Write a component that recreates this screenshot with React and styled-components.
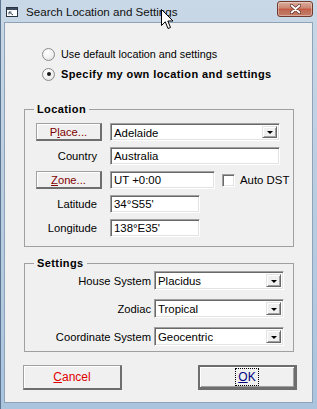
import React from 'react';
import styled, { createGlobalStyle } from 'styled-components';

const GlobalStyle = createGlobalStyle`
  html, body {
    margin: 0;
    padding: 0;
  }
  body {
    width: 317px;
    height: 409px;
    overflow: hidden;
    font-family: "Liberation Sans", Arial, sans-serif;
  }
`;

const Window = styled.div`
  position: relative;
  width: 317px;
  height: 409px;
  box-sizing: border-box;
  display: flex;
  flex-direction: column;
  background: linear-gradient(180deg, #c9d8e6 0%, #bccfe2 40%, #aac4de 100%);
  border-left: 1px solid #5c7691;
`;

const TitleBar = styled.div`
  height: 22px;
  display: flex;
  align-items: center;
  padding-left: 4px;
  position: relative;
`;

const TitleText = styled.span`
  margin-left: 7px;
  font-size: 11.6px;
  color: #111;
  padding-top: 1px;
`;

const CloseButton = styled.div`
  position: absolute;
  top: 1px;
  left: 276px;
  width: 34px;
  height: 14px;
  border: 1px solid #6e3b2e;
  border-radius: 3px;
  background: linear-gradient(180deg, #dcab9a 0%, #c98672 45%, #d2452c 50%, #bd6a55 56%, #c47c68 100%);
  display: flex;
  align-items: center;
  justify-content: center;
  box-shadow: inset 0 0 0 1px rgba(255, 255, 255, 0.35);
`;

const Client = styled.div`
  flex: 1;
  margin: 0 4px 6px 3px;
  border: 1px solid #8ea3b8;
  background: #f0f0f0;
  display: flex;
  flex-direction: column;
  font-size: 10.6px;
  color: #000;
`;

const RadioList = styled.div`
  display: flex;
  flex-direction: column;
  gap: 4px;
  padding: 23px 0 0 37px;
`;

const RadioRow = styled.label`
  display: flex;
  align-items: center;
  height: 16px;
  gap: 6px;
  font-weight: ${(p) => (p.$checked ? 'bold' : 'normal')};
  font-size: ${(p) => (p.$checked ? '11px' : '10.8px')};
  letter-spacing: ${(p) => (p.$checked ? '0.4px' : '0')};
`;

const RadioDot = styled.span`
  width: 11px;
  height: 11px;
  border-radius: 50%;
  border: 1px solid #8c8c8c;
  background: radial-gradient(circle at 40% 35%, #ffffff 0%, #f4f4f4 45%, #d6d6d6 100%);
  display: flex;
  align-items: center;
  justify-content: center;

  &::after {
    content: '';
    width: 4px;
    height: 4px;
    border-radius: 50%;
    background: ${(p) => (p.$checked ? '#1a1a1a' : 'transparent')};
  }
`;

const GroupBox = styled.fieldset`
  margin: ${(p) => p.$top}px 18px 0 19px;
  padding: ${(p) => p.$padTop}px 9px ${(p) => p.$padBottom}px 11px;
  border: 1px solid #a0a0a0;
  min-width: 0;
`;

const Legend = styled.legend`
  margin-left: -2px;
  padding: 0 3px;
  font-weight: bold;
  font-size: 11px;
  letter-spacing: 0.4px;
  line-height: 14px;
`;

const LocationGrid = styled.div`
  display: grid;
  grid-template-columns: 66px 1fr;
  grid-auto-rows: 18px;
  column-gap: 8px;
  row-gap: 6px;
  align-items: center;
`;

const SettingsGrid = styled.div`
  display: grid;
  grid-template-columns: 1fr 130px;
  grid-auto-rows: 19px;
  column-gap: 3px;
  row-gap: 9px;
  align-items: center;
`;

const FieldLabel = styled.span`
  text-align: right;
  padding-right: ${(p) => p.$pad || 0}px;
  white-space: nowrap;
  font-size: 11.2px;
`;

const sunken = `
  box-sizing: border-box;
  border: 1px solid;
  border-color: #a0a0a0 #ffffff #ffffff #a0a0a0;
  box-shadow: inset 1px 1px #696969, inset -1px -1px #e3e3e3;
  background: #fff;
`;

const TextBox = styled.div`
  ${sunken}
  width: ${(p) => p.$width}px;
  height: ${(p) => p.$height || 18}px;
  padding: 2px 3px;
  font-size: 11.4px;
  line-height: 13px;
  white-space: nowrap;
`;

const Combo = styled.div`
  ${sunken}
  width: ${(p) => p.$width}px;
  height: ${(p) => p.$height || 18}px;
  display: flex;
  align-items: stretch;
  padding: 2px;
`;

const ComboText = styled.span`
  flex: 1;
  padding-left: 1px;
  font-size: 11.4px;
  line-height: 14px;
  white-space: nowrap;
`;

const ComboArrow = styled.span`
  width: 15px;
  box-sizing: border-box;
  background: #f0f0f0;
  border: 1px solid;
  border-color: #e3e3e3 #696969 #696969 #e3e3e3;
  box-shadow: inset 1px 1px #fff, inset -1px -1px #a0a0a0;
  display: flex;
  align-items: center;
  justify-content: center;

  &::after {
    content: '';
    margin-top: 1px;
    border-left: 3px solid transparent;
    border-right: 3px solid transparent;
    border-top: 3px solid #000;
  }
`;

const PushButton = styled.div`
  box-sizing: border-box;
  height: 18px;
  background: #f0f0f0;
  border-style: solid;
  border-width: 1px 2px 2px 1px;
  border-color: #a0a0a0 #6e6e6e #6e6e6e #a0a0a0;
  box-shadow: inset 1px 1px #ffffff;
  display: flex;
  align-items: center;
  justify-content: center;
  color: #800000;
  font-size: 11.2px;
`;

const ZoneCell = styled.div`
  display: flex;
  align-items: center;
  white-space: nowrap;
`;

const CheckBox = styled.span`
  ${sunken}
  flex: none;
  width: 13px;
  height: 13px;
  margin: 0 5px 0 7px;
`;

const CheckLabel = styled.span`
  font-size: 11.4px;
`;

const ButtonBar = styled.div`
  display: flex;
  justify-content: space-between;
  margin-top: 13px;
  padding: 0 15px 0 18px;
`;

const DialogButton = styled.div`
  box-sizing: border-box;
  width: 99px;
  height: 25px;
  background: #f0f0f0;
  border-style: solid;
  border-width: ${(p) => (p.$default ? '2px 3px 3px 2px' : '1px 2px 2px 1px')};
  border-color: ${(p) => (p.$default ? '#6e6e6e' : '#a0a0a0 #6e6e6e #6e6e6e #a0a0a0')};
  box-shadow: ${(p) => (p.$default ? 'inset 1px 1px #fff, inset -1px -1px #a0a0a0' : 'inset 1px 1px #fff')};
  display: flex;
  align-items: center;
  justify-content: center;
  font-size: 12px;
  color: ${(p) => p.$color};
`;

const FocusRect = styled.span`
  padding: 1px 2px;
  border: 1px dotted #000;
  line-height: 14px;
`;

const Mnemonic = styled.u`
  text-decoration: underline;
  text-underline-offset: 1px;
`;

const Cursor = styled.svg`
  position: absolute;
  left: 160px;
  top: 9px;
`;

const WindowIcon = () => (
  <svg width="14" height="13" viewBox="0 0 14 13">
    <rect x="1.5" y="2.5" width="11" height="9" fill="#fff" stroke="#2a3440" />
    <rect x="2" y="3" width="10" height="2" fill="#3d4d5e" />
    <path d="M4 7 L8 10 M4 7 L4 9.5 M4 7 L6.5 7" stroke="#3d4d5e" strokeWidth="1" fill="none" />
  </svg>
);

const CloseGlyph = () => (
  <svg width="11" height="10" viewBox="0 0 11 10">
    <path d="M1.5 1.5 L9.5 8.5 M9.5 1.5 L1.5 8.5" stroke="#5a2a20" strokeWidth="3.2" strokeLinecap="round" />
    <path d="M1.5 1.5 L9.5 8.5 M9.5 1.5 L1.5 8.5" stroke="#ffffff" strokeWidth="1.8" strokeLinecap="round" />
  </svg>
);

const MouseCursor = () => (
  <Cursor width="13" height="21" viewBox="0 0 13 21">
    <path
      d="M0.5 0.5 L0.5 16.5 L4.3 12.8 L7 19.5 L9.5 18.5 L6.8 12 L12 12 Z"
      fill="#fff"
      stroke="#000"
      strokeWidth="1"
      strokeLinejoin="round"
    />
  </Cursor>
);

const App = () => (
  <>
    <GlobalStyle />
    <Window>
      <TitleBar>
        <WindowIcon />
        <TitleText>Search Location and Settings</TitleText>
        <CloseButton>
          <CloseGlyph />
        </CloseButton>
      </TitleBar>
      <Client>
        <RadioList>
          <RadioRow>
            <RadioDot />
            Use default location and settings
          </RadioRow>
          <RadioRow $checked>
            <RadioDot $checked />
            Specify my own location and settings
          </RadioRow>
        </RadioList>

        <GroupBox $top={20} $padTop={7} $padBottom={9}>
          <Legend>Location</Legend>
          <LocationGrid>
            <PushButton>
              P<Mnemonic>l</Mnemonic>ace...
            </PushButton>
            <Combo $width={170}>
              <ComboText>Adelaide</ComboText>
              <ComboArrow />
            </Combo>

            <FieldLabel $pad={5}>Country</FieldLabel>
            <TextBox $width={170}>Australia</TextBox>

            <PushButton>
              <Mnemonic>Z</Mnemonic>one...
            </PushButton>
            <ZoneCell>
              <TextBox $width={105}>UT +0:00</TextBox>
              <CheckBox />
              <CheckLabel>Auto DST</CheckLabel>
            </ZoneCell>

            <FieldLabel $pad={5}>Latitude</FieldLabel>
            <TextBox $width={90}>34°S55'</TextBox>

            <FieldLabel $pad={5}>Longitude</FieldLabel>
            <TextBox $width={90}>138°E35'</TextBox>
          </LocationGrid>
        </GroupBox>

        <GroupBox $top={9} $padTop={1} $padBottom={5}>
          <Legend>Settings</Legend>
          <SettingsGrid>
            <FieldLabel>House System</FieldLabel>
            <Combo $width={130} $height={19}>
              <ComboText>Placidus</ComboText>
              <ComboArrow />
            </Combo>

            <FieldLabel>Zodiac</FieldLabel>
            <Combo $width={130} $height={19}>
              <ComboText>Tropical</ComboText>
              <ComboArrow />
            </Combo>

            <FieldLabel>Coordinate System</FieldLabel>
            <Combo $width={130} $height={19}>
              <ComboText>Geocentric</ComboText>
              <ComboArrow />
            </Combo>
          </SettingsGrid>
        </GroupBox>

        <ButtonBar>
          <DialogButton $color="#e00000">
            <span>
              <Mnemonic>C</Mnemonic>ancel
            </span>
          </DialogButton>
          <DialogButton $default $color="#000080">
            <FocusRect>
              <Mnemonic>O</Mnemonic>K
            </FocusRect>
          </DialogButton>
        </ButtonBar>
      </Client>
      <MouseCursor />
    </Window>
  </>
);

export default App;
